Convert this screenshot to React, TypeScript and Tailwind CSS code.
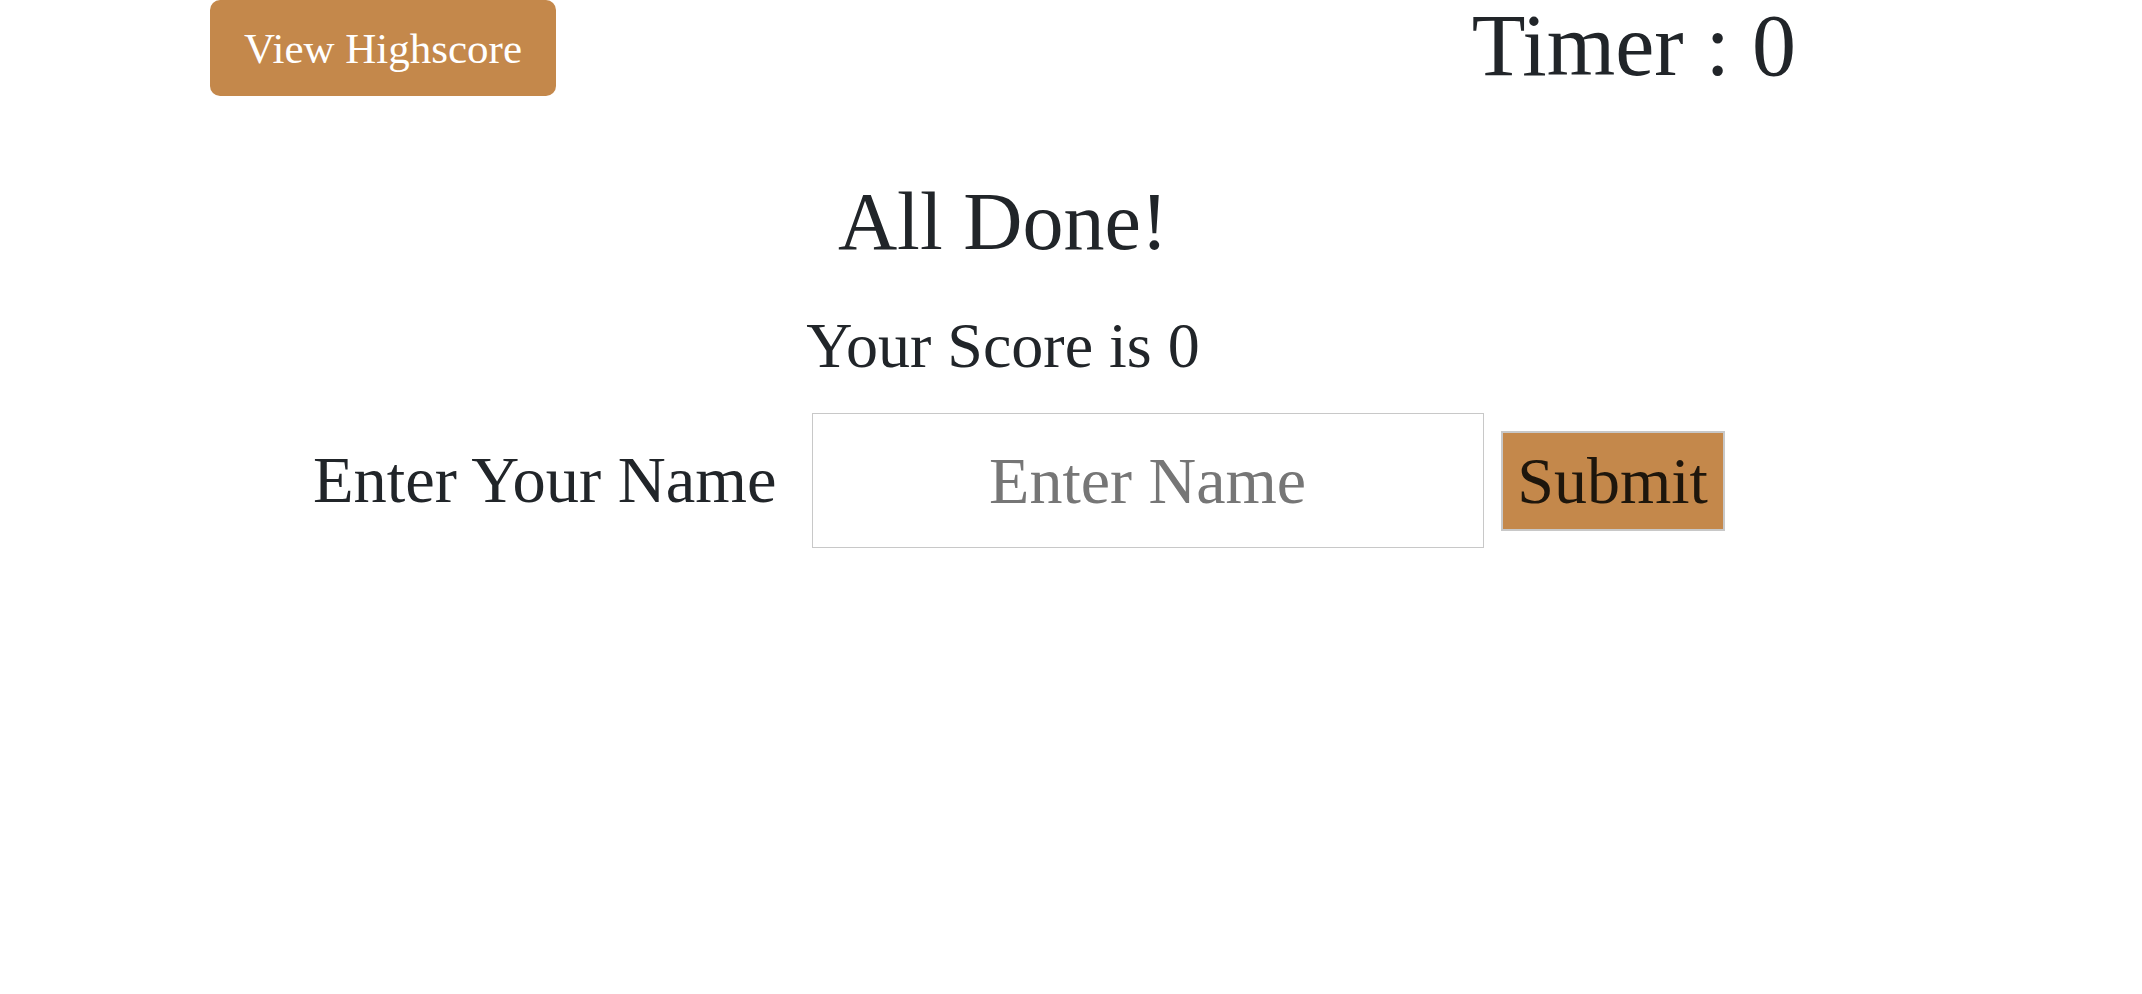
import { useState } from "react";

const serif = "font-['Liberation_Serif','Times_New_Roman',serif]";

export default function App() {
  const [name, setName] = useState("");
  const [score] = useState(0);
  const [timer] = useState(0);

  return (
    <div className={`min-h-screen bg-white pl-[210px] pr-[346px] text-[#212529] ${serif}`}>
      <header className="flex items-start justify-between">
        <button
          type="button"
          className="flex h-[96px] w-[346px] items-center justify-center rounded-[10px] bg-[#c4884b] text-[43px] leading-none text-white"
        >
          View Highscore
        </button>
        <p className="mt-[2px] text-[88px] leading-none">Timer : {timer}</p>
      </header>

      <main className="flex flex-col">
        <h1 className="mt-[85px] text-center text-[82px] leading-none font-normal">All Done!</h1>
        <p className="mt-[51px] text-center text-[64px] leading-none">Your Score is {score}</p>

        <form
          className="mt-[35px] flex items-center pl-[103px]"
          onSubmit={(event) => event.preventDefault()}
        >
          <label htmlFor="name" className="text-[66.5px] leading-none whitespace-nowrap">
            Enter Your Name
          </label>
          <input
            id="name"
            value={name}
            onChange={(event) => setName(event.target.value)}
            placeholder="Enter Name"
            className={`ml-[35px] h-[135px] w-[672px] shrink-0 border border-[#c8c8c8] bg-white text-center text-[66px] leading-none text-[#212529] placeholder-[#767676] outline-none ${serif}`}
          />
          <button
            type="submit"
            className="ml-[17px] flex h-[100px] w-[224px] shrink-0 items-center justify-center border-2 border-[#c8c8c8] bg-[#c4884b] text-[66px] leading-none text-[#1e160c]"
          >
            Submit
          </button>
        </form>
      </main>
    </div>
  );
}
